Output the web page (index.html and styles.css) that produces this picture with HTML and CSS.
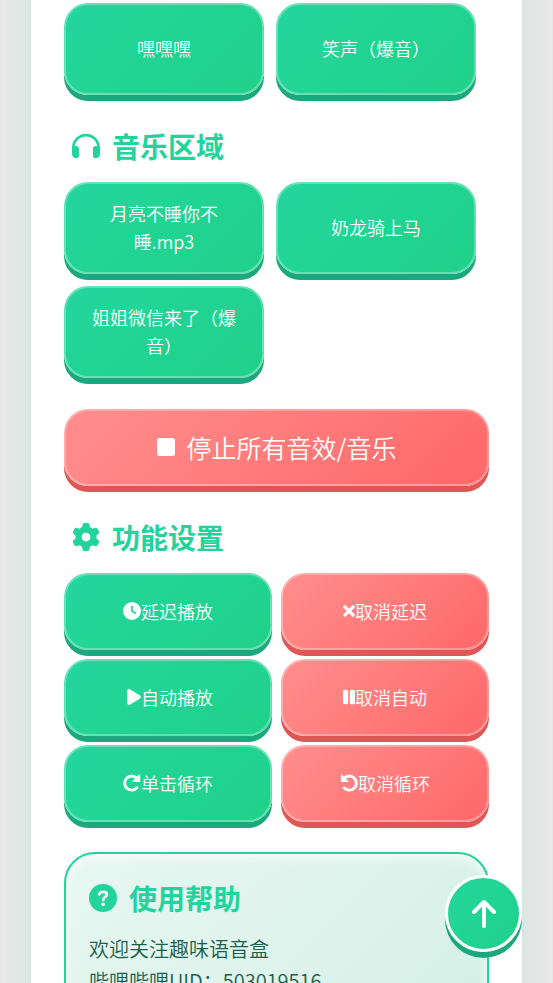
FILE: index.html
```html
<!DOCTYPE html>
<html lang="zh-CN">
<head>
<meta charset="utf-8">
<meta name="viewport" content="width=device-width, initial-scale=1">
<title>趣味语音盒</title>
<link rel="stylesheet" href="styles.css">
</head>
<body>
<div class="stage">
<main class="container">
  <section class="sound-grid">
    <button class="btn sound" type="button">嘿嘿嘿</button>
    <button class="btn sound" type="button">笑声（爆音）</button>
  </section>

  <h2 class="title">
    <svg class="title-icon" viewBox="0 0 512 512" aria-hidden="true"><path d="M256 80C149.900 80 62.400 159.400 49.600 262c9.400-3.800 19.600-6 30.400-6 26.500 0 48 21.500 48 48v128c0 26.500-21.500 48-48 48-44.200 0-80-35.800-80-80V288C0 146.600 114.600 32 256 32s256 114.600 256 256v112c0 44.200-35.800 80-80 80-26.500 0-48-21.500-48-48V304c0-26.500 21.500-48 48-48 10.800 0 21 2.100 30.400 6C449.600 159.400 362.100 80 256 80z"/></svg>
    <span>音乐区域</span>
  </h2>
  <section class="sound-grid">
    <button class="btn sound" type="button">月亮不睡你不睡.mp3</button>
    <button class="btn sound" type="button">奶龙骑上马</button>
    <button class="btn sound" type="button">姐姐微信来了（爆音）</button>
  </section>

  <button class="btn danger stop" type="button">
    <svg class="stop-icon" viewBox="0 0 384 512" aria-hidden="true"><path d="M0 112c0-26.500 21.500-48 48-48h288c26.500 0 48 21.500 48 48v288c0 26.500-21.500 48-48 48H48c-26.500 0-48-21.500-48-48z"/></svg>
    <span>停止所有音效/音乐</span>
  </button>

  <h2 class="title">
    <svg class="title-icon" viewBox="0 0 512 512" aria-hidden="true"><path d="M495.900 166.600c3.200 8.700.5 18.400-6.400 24.600l-43.300 39.400c1.100 8.300 1.700 16.800 1.700 25.400s-.6 17.100-1.700 25.400l43.300 39.400c6.900 6.200 9.600 15.900 6.400 24.600-4.400 11.900-9.700 23.300-15.800 34.300l-4.700 8.100c-6.600 11-14 21.400-22.100 31.200-5.900 7.200-15.700 9.600-24.500 6.800l-55.700-17.700c-13.400 10.300-28.200 18.900-44 25.400l-12.500 57.100c-2 9.100-9 16.300-18.200 17.800-13.800 2.300-28 3.500-42.500 3.500s-28.700-1.200-42.500-3.500c-9.200-1.500-16.200-8.700-18.200-17.800l-12.500-57.100c-15.800-6.500-30.600-15.100-44-25.400l-55.600 17.800c-8.800 2.800-18.600.3-24.500-6.800-8.100-9.800-15.500-20.200-22.100-31.200l-4.700-8.100c-6.100-11-11.400-22.400-15.800-34.300-3.200-8.700-.5-18.400 6.400-24.600l43.300-39.400C64.600 273.100 64 264.600 64 256s.6-17.100 1.700-25.400l-43.300-39.400c-6.900-6.200-9.600-15.900-6.400-24.600 4.400-11.900 9.700-23.300 15.800-34.300l4.700-8.100c6.600-11 14-21.400 22.100-31.200 5.900-7.200 15.700-9.600 24.500-6.800l55.700 17.700c13.400-10.300 28.200-18.900 44-25.400l12.500-57.100c2-9.100 9-16.300 18.200-17.800C227.300 1.200 241.500 0 256 0s28.700 1.200 42.500 3.500c9.200 1.500 16.200 8.700 18.200 17.800l12.500 57.100c15.800 6.500 30.600 15.100 44 25.400l55.700-17.700c8.800-2.800 18.600-.3 24.500 6.800 8.100 9.800 15.500 20.200 22.100 31.200l4.700 8.100c6.100 11 11.400 22.400 15.800 34.300zM256 336a80 80 0 1 0 0-160 80 80 0 1 0 0 160z"/></svg>
    <span>功能设置</span>
  </h2>
  <section class="action-grid">
    <button class="btn" type="button"><svg class="icon" viewBox="0 0 512 512" aria-hidden="true"><path d="M256 0a256 256 0 1 1 0 512 256 256 0 1 1 0-512zM232 120v136c0 8 4 15.500 10.700 20l96 64c11 7.400 25.900 4.400 33.300-6.700s4.400-25.900-6.700-33.300L280 243.200V120c0-13.300-10.700-24-24-24s-24 10.700-24 24z"/></svg><span>延迟播放</span></button>
    <button class="btn danger" type="button"><svg class="icon narrow" viewBox="0 0 320 480" aria-hidden="true"><path d="m24 104 272 272M296 104 24 376" fill="none" stroke="currentColor" stroke-width="84"/></svg><span>取消延迟</span></button>
    <button class="btn" type="button"><svg class="icon play" viewBox="0 0 384 512" aria-hidden="true"><path d="M73 39c-14.800-9.100-33.400-9.400-48.500-.9S0 62.600 0 80v352c0 17.400 9.400 33.400 24.500 41.900s33.700 8.100 48.500-.9l288-176c14.300-8.700 23-24.200 23-41s-8.700-32.200-23-41z"/></svg><span>自动播放</span></button>
    <button class="btn danger" type="button"><svg class="icon narrow" viewBox="0 0 320 480" aria-hidden="true"><path d="M48 48C21.500 48 0 69.500 0 96v288c0 26.500 21.500 48 48 48h42c26.500 0 48-21.500 48-48V96c0-26.500-21.500-48-48-48zM230 48c-26.500 0-48 21.500-48 48v288c0 26.500 21.500 48 48 48h42c26.500 0 48-21.500 48-48V96c0-26.500-21.500-48-48-48z"/></svg><span>取消自动</span></button>
    <button class="btn" type="button"><svg class="icon" viewBox="0 0 512 512" aria-hidden="true"><path d="M396 392A200 200 0 1 1 390 120" fill="none" stroke="currentColor" stroke-width="84" stroke-linecap="round"/><path d="M463 14c10-8 25-2 25 12v186c0 9-7 16-16 16H286c-14 0-20-16-11-26z"/></svg><span>单击循环</span></button>
    <button class="btn danger" type="button"><svg class="icon" viewBox="0 0 512 512" aria-hidden="true"><path d="M116 392A200 200 0 1 0 122 120" fill="none" stroke="currentColor" stroke-width="84" stroke-linecap="round"/><path d="M49 14c-10-8-25-2-25 12v186c0 9 7 16 16 16h186c14 0 20-16 11-26z"/></svg><span>取消循环</span></button>
  </section>

  <section class="help">
    <h2 class="title help-title">
      <svg class="title-icon" viewBox="0 0 512 512" aria-hidden="true"><circle cx="256" cy="256" r="256"/><path class="cutout" d="M188 190c6-26 28-44 60-44h20c36 0 58 20 58 48 0 46-66 44-66 90v12" stroke-width="52" stroke-linecap="round" stroke-linejoin="round" fill="none"/><circle class="dot" cx="259" cy="372" r="35"/></svg>
      <span>使用帮助</span>
    </h2>
    <p>欢迎关注趣味语音盒</p>
    <p>哔哩哔哩UID：503019516</p>
  </section>
</main>
</div>

<button class="to-top" type="button" aria-label="返回顶部">
  <svg class="top-icon" viewBox="0 0 384 512" aria-hidden="true"><path d="M214.600 41.400c-12.500-12.500-32.800-12.500-45.300 0l-160 160c-12.500 12.500-12.500 32.800 0 45.300s32.800 12.500 45.300 0L160 141.200V448c0 17.700 14.300 32 32 32s32-14.300 32-32V141.200l105.400 105.400c12.500 12.500 32.800 12.500 45.300 0s12.500-32.800 0-45.300z"/></svg>
</button>
</body>
</html>
```
FILE: styles.css
```css
:root {
  --green: #22d49b;
  --green-dark: #1ba87c;
  --red-dark: #e05656;
}

* {
  box-sizing: border-box;
}

body {
  margin: 0;
  background: #e8e8e8;
  color: #1a5f4a;
  font-family: "Noto Sans CJK SC", sans-serif;
  font-weight: 350;
}

svg {
  display: block;
  flex: none;
  fill: currentColor;
}

.stage {
  height: 100vh;
  overflow: hidden;
}

/* Starts and ends outside the stage so the side shadow stays even. */
.container {
  margin: -80px 31px 0;
  padding: 83px 33px 120px;
  background: #fff;
  box-shadow: 0 0 32px rgba(34, 212, 155, 0.13);
}

.btn {
  display: flex;
  align-items: center;
  justify-content: center;
  min-height: 77px;
  padding: 0 18px 2px;
  border: 2px solid rgba(255, 255, 255, 0.3);
  border-radius: 24px;
  background: linear-gradient(135deg, #24d69d, #1fd189) border-box;
  box-shadow: 0 6px 0 var(--green-dark);
  color: #fff;
  font-family: inherit;
  font-size: 18px;
  font-weight: inherit;
  line-height: 28px;
}

.danger {
  background: linear-gradient(135deg, #ff8e8e, #ff6868) border-box;
  box-shadow: 0 6px 0 var(--red-dark);
}

.sound-grid {
  display: grid;
  grid-template-columns: repeat(auto-fill, 200px);
  gap: 12px;
}

.sound {
  min-height: 92px;
}

.title {
  display: flex;
  align-items: center;
  gap: 12px;
  margin: 31px 0 16px;
  padding-left: 8px;
  color: var(--green);
  font-size: 28px;
  font-weight: 700;
  line-height: 40px;
}

.title-icon {
  width: 28px;
  height: 28px;
}

.cutout {
  stroke: #e5f6f0;
}

.dot {
  fill: #e5f6f0;
}

.stop {
  gap: 12px;
  width: 100%;
  margin-top: 31px;
  font-size: 25px;
}

.stop-icon {
  width: 18px;
  height: 24px;
}

.action-grid {
  display: grid;
  grid-template-columns: 1fr 1fr;
  gap: 9px;
}

.icon {
  width: 18px;
  height: 18px;
}

.narrow {
  width: 12px;
}

.play {
  width: 14px;
  margin-left: 4px;
}

.help {
  margin-top: 30px;
  padding: 24px 23px;
  border: 2px solid var(--green);
  border-radius: 31px;
  background: linear-gradient(135deg, #e8f7f2, #d5f0e6);
  box-shadow: inset 0 4px 10px rgba(255, 255, 255, 0.7);
  font-size: 20px;
  line-height: 32px;
}

.help-title {
  margin: 0 0 15px;
  padding-left: 0;
}

.help p {
  margin: 0;
}

.to-top {
  position: fixed;
  right: 31px;
  bottom: 31px;
  display: flex;
  align-items: center;
  justify-content: center;
  width: 77px;
  height: 77px;
  padding: 0;
  border: 3px solid #fff;
  border-radius: 50%;
  background: linear-gradient(135deg, #24d69d, #1fd189);
  box-shadow: 0 6px 0 var(--green-dark);
  color: #fff;
}

.top-icon {
  width: 24px;
  height: 32px;
}
```
